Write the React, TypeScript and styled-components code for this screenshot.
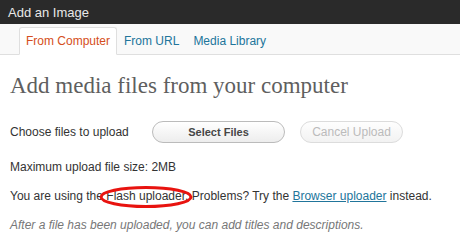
import React from "react";
import styled, { createGlobalStyle } from "styled-components";

const Global = createGlobalStyle`
  html, body { margin: 0; padding: 0; background: #fff; }
  body { width: 460px; height: 245px; overflow: hidden; font-family: "Liberation Sans", Arial, sans-serif; }
`;

const Frame = styled.div`
  width: 460px;
  height: 245px;
  display: flex;
  flex-direction: column;
  background: #fff;
`;

const TitleBar = styled.div`
  height: 24px;
  background: #2a2a2a;
  color: #e8e8e8;
  font-size: 13px;
  display: flex;
  align-items: center;
  padding-left: 8px;
  flex-shrink: 0;
`;

const TabBar = styled.div`
  height: 30px;
  background: #f9f9f9;
  border-bottom: 1px solid #dfdfdf;
  display: flex;
  align-items: flex-end;
  padding-left: 19px;
  flex-shrink: 0;
`;

const Tab = styled.a<{ $active?: boolean }>`
  height: 28px;
  box-sizing: border-box;
  margin-bottom: -1px;
  display: flex;
  align-items: center;
  padding: 0 6px;
  font-size: 12px;
  text-decoration: none;
  color: ${(p) => (p.$active ? "#d54e21" : "#21759b")};
  background: ${(p) => (p.$active ? "#fff" : "transparent")};
  border: 1px solid ${(p) => (p.$active ? "#dfdfdf" : "transparent")};
  border-bottom-color: ${(p) => (p.$active ? "#fff" : "transparent")};
  border-radius: 3px 3px 0 0;
`;

const Body = styled.div`
  padding: 0 10px;
  display: flex;
  flex-direction: column;
`;

const Heading = styled.h3`
  margin: 17px 0 0 0;
  font-family: "Liberation Serif", "Times New Roman", serif;
  font-weight: normal;
  font-size: 23px;
  line-height: 28px;
  color: #5f5f5f;
`;

const UploadRow = styled.div`
  display: flex;
  align-items: center;
  margin-top: 21px;
  height: 22px;
`;

const Label = styled.span`
  font-size: 12px;
  color: #333;
  width: 142px;
`;

const PillButton = styled.button<{ $disabled?: boolean; $w: number }>`
  width: ${(p) => p.$w}px;
  height: 22px;
  box-sizing: border-box;
  border-radius: 11px;
  border: 1px solid ${(p) => (p.$disabled ? "#dcdcdc" : "#bbb")};
  background: ${(p) => (p.$disabled ? "linear-gradient(#fefefe, #f2f2f2)" : "linear-gradient(#fff, #ededed)")};
  color: ${(p) => (p.$disabled ? "#bbb" : "#464646")};
  font-family: "Liberation Sans", Arial, sans-serif;
  font-size: ${(p) => (p.$disabled ? "12px" : "11px")};
  font-weight: ${(p) => (p.$disabled ? "normal" : "bold")};
  margin-right: 15px;
  padding: 0;
`;

const Para = styled.p<{ $italic?: boolean; $top: number }>`
  margin: ${(p) => p.$top}px 0 0 0;
  font-size: 12px;
  line-height: 16px;
  color: ${(p) => (p.$italic ? "#777" : "#333")};
  font-style: ${(p) => (p.$italic ? "italic" : "normal")};
`;

const Circled = styled.span`
  position: relative;
`;

const Ellipse = styled.svg`
  position: absolute;
  left: -7px;
  top: -3px;
  pointer-events: none;
`;

const Link = styled.a`
  color: #21759b;
  text-decoration: underline;
`;

export default function App() {
  return (
    <Frame>
      <Global />
      <TitleBar>Add an Image</TitleBar>
      <TabBar>
        <Tab $active>From Computer</Tab>
        <Tab>From URL</Tab>
        <Tab>Media Library</Tab>
      </TabBar>
      <Body>
        <Heading>Add media files from your computer</Heading>
        <UploadRow>
          <Label>Choose files to upload</Label>
          <PillButton $w={133}>Select Files</PillButton>
          <PillButton $w={103} $disabled disabled>
            Cancel Upload
          </PillButton>
        </UploadRow>
        <Para $top={16}>Maximum upload file size: 2MB</Para>
        <Para $top={13}>
          You are using the{" "}
          <Circled>
            Flash uploader.
            <Ellipse width="94" height="22" viewBox="0 0 94 22">
              <ellipse cx="47" cy="11" rx="45" ry="9.5" fill="none" stroke="#e8130f" strokeWidth="3" />
            </Ellipse>
          </Circled>{" "}
          Problems? Try the <Link href="#">Browser uploader</Link> instead.
        </Para>
        <Para $italic $top={13}>
          After a file has been uploaded, you can add titles and descriptions.
        </Para>
      </Body>
    </Frame>
  );
}
